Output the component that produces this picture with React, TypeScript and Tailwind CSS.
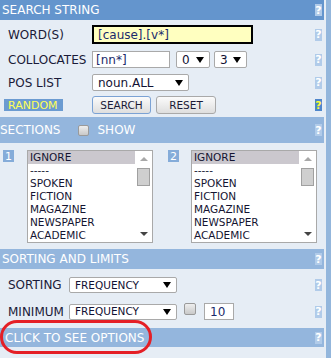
const font = "font-['DejaVu_Sans',Verdana,sans-serif]";

function Help({ yellow = false }: { yellow?: boolean }) {
  return (
    <span
      className={`flex h-[12px] w-[7px] items-center justify-center text-[11px] font-bold leading-none ${
        yellow ? "bg-[#4f86cb] text-[#ffff33]" : "bg-[#b1cbe9] text-white"
      }`}
    >
      ?
    </span>
  );
}

function Arrow() {
  return (
    <span className="h-0 w-0 border-x-[4px] border-t-[6px] border-x-transparent border-t-black" />
  );
}

function Select({
  text,
  className,
  textSize = "text-[12px]",
}: {
  text: string;
  className: string;
  textSize?: string;
}) {
  return (
    <div
      className={`flex items-center justify-between rounded-[2px] border border-[#a9a9a9] bg-white pl-[5px] pr-[5px] text-[#111133] ${textSize} ${className}`}
    >
      <span className="leading-none">{text}</span>
      <Arrow />
    </div>
  );
}

function Checkbox({ className = "" }: { className?: string }) {
  return (
    <span
      className={`block h-[11px] w-[11px] rounded-[2px] border border-[#9a9a9a] bg-gradient-to-b from-[#eeeeee] to-[#c9c9c9] ${className}`}
    />
  );
}

function Header({
  title,
  dark = false,
  h,
  children,
  pl = "pl-[2px]",
}: {
  title: string;
  dark?: boolean;
  h: string;
  children?: React.ReactNode;
  pl?: string;
}) {
  return (
    <div
      className={`flex items-center justify-between pr-[2px] text-[12px] text-white ${h} ${pl} ${
        dark ? "bg-[#6495cd]" : "bg-[#94b6dd]"
      }`}
    >
      <div className="flex items-center">
        <span className="leading-none">{title}</span>
        {children}
      </div>
      <Help />
    </div>
  );
}

const sections = ["IGNORE", "-----", "SPOKEN", "FICTION", "MAGAZINE", "NEWSPAPER", "ACADEMIC"];

function ListBox() {
  return (
    <div className="flex h-[93px] w-[126px] border border-[#a9a9a9] bg-white">
      <div className="flex-1">
        {sections.map((s, i) => (
          <div
            key={s}
            className={`flex h-[13px] items-center pl-[2px] text-[10.5px] leading-none text-[#141432] ${
              i === 0 ? "bg-[#cbc8ce]" : ""
            }`}
          >
            {s}
          </div>
        ))}
      </div>
      <div className="flex w-[17px] flex-col items-center">
        <span className="mt-[6px] h-0 w-0 border-x-[4px] border-b-[4px] border-x-transparent border-b-[#a8a8a8]" />
        <span className="mt-[7px] h-[18px] w-[13px] border border-[#a0a0a0] bg-[#cfcfcf]" />
        <span className="mt-auto mb-[6px] h-0 w-0 border-x-[4px] border-t-[4px] border-x-transparent border-t-[#444]" />
      </div>
    </div>
  );
}

export default function App() {
  return (
    <div className={`flex h-[358px] w-[331px] bg-[#e6edf5] ${font}`}>
      <div className="relative flex w-[324px] flex-col">
        <Header title="SEARCH STRING" dark h="h-[20px]" />

        <div className="flex flex-col pb-[3px] pt-[5px] text-[12px] text-[#1a1a38]">
          <div className="flex h-[19px] items-center pr-[2px]">
            <span className="w-[92px] pl-[8px] leading-none">WORD(S)</span>
            <div className="flex h-[19px] w-[161px] items-center border-2 border-black bg-[#ffffc0] pl-[4px] text-[#1b2a6b]">
              [cause].[v*]
            </div>
            <span className="flex-1" />
            <Help />
          </div>

          <div className="mt-[7px] flex h-[17px] items-center pr-[2px]">
            <span className="w-[92px] pl-[8px] leading-none">COLLOCATES</span>
            <div className="flex h-[17px] w-[78px] items-center border border-[#a9a9a9] bg-white pl-[3px] text-[#1b2a6b]">
              [nn*]
            </div>
            <Select text="0" className="ml-[6px] h-[17px] w-[34px]" />
            <Select text="3" className="ml-[4px] h-[17px] w-[33px]" />
            <span className="flex-1" />
            <Help />
          </div>

          <div className="mt-[6px] flex h-[17px] items-center pr-[2px]">
            <span className="w-[92px] pl-[8px] leading-none">POS LIST</span>
            <Select text="noun.ALL" className="h-[17px] w-[97px]" />
            <span className="flex-1" />
            <Help />
          </div>

          <div className="mt-[5px] flex h-[18px] items-center pr-[2px]">
            <span className="ml-[4px] flex h-[12px] w-[59px] items-center bg-[#6b9bd1] pl-[4px] text-[11px] leading-none text-[#ffff55]">
              RANDOM
            </span>
            <button className="ml-[29px] h-[18px] w-[59px] rounded-[3px] border border-[#7ba2d4] bg-gradient-to-b from-[#fbfbfb] to-[#dedede] text-[10.5px] leading-none text-[#1a1a38]">
              SEARCH
            </button>
            <button className="ml-[5px] h-[18px] w-[60px] rounded-[3px] border border-[#a9a9a9] bg-gradient-to-b from-[#fbfbfb] to-[#dedede] text-[10.5px] leading-none text-[#1a1a38]">
              RESET
            </button>
            <span className="flex-1" />
            <Help yellow />
          </div>
        </div>

        <Header title="SECTIONS" h="h-[26px]" pl="pl-0">
          <Checkbox className="ml-[17px]" />
          <span className="ml-[9px] leading-none">SHOW</span>
        </Header>

        <div className="flex h-[106px] items-start pt-[7px]">
          <span className="ml-[3px] flex h-[12px] w-[11px] items-center justify-center bg-[#85acd9] text-[11px] leading-none text-white">
            1
          </span>
          <div className="ml-[13px]">
            <ListBox />
          </div>
          <span className="ml-[15px] flex h-[12px] w-[11px] items-center justify-center bg-[#85acd9] text-[11px] leading-none text-white">
            2
          </span>
          <div className="ml-[12px]">
            <ListBox />
          </div>
        </div>

        <Header title="SORTING AND LIMITS" h="h-[20px]" />

        <div className="flex h-[59px] flex-col pt-[8px] text-[12px] text-[#1a1a38]">
          <div className="flex h-[16px] items-center pr-[2px]">
            <span className="w-[69px] pl-[8px] leading-none">SORTING</span>
            <Select text="FREQUENCY" textSize="text-[10.5px]" className="h-[16px] w-[108px]" />
            <span className="flex-1" />
            <Help />
          </div>
          <div className="mt-[10px] flex h-[17px] items-center pr-[2px]">
            <span className="w-[69px] pl-[8px] leading-none">MINIMUM</span>
            <Select text="FREQUENCY" textSize="text-[10.5px]" className="h-[16px] w-[108px]" />
            <Checkbox className="mb-[5px] ml-[7px] h-[12px] w-[12px]" />
            <div className="ml-[8px] flex h-[17px] w-[30px] items-center border border-[#a9a9a9] bg-white pl-[5px] text-[#1b2a6b]">
              10
            </div>
            <span className="flex-1" />
            <Help />
          </div>
        </div>

        <Header title="CLICK TO SEE OPTIONS" h="h-[19px]" pl="pl-[5px]" />

        <div className="absolute left-0 top-[320px] h-[34px] w-[152px] rounded-[20px] border-[3px] border-[#e41f26]" />
      </div>
      <div className="w-[2px]" />
      <div className="w-[5px] bg-[#93b6dc]" />
    </div>
  );
}
